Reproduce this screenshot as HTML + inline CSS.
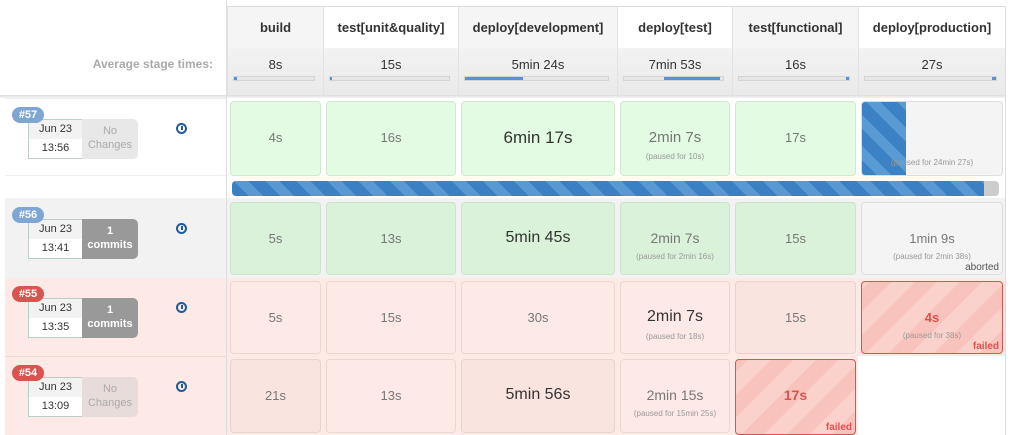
<!DOCTYPE html>
<html><head><meta charset="utf-8"><style>
body{margin:0;width:1015px;height:435px;background:#fff;font-family:"Liberation Sans",Arial,sans-serif;position:relative;overflow:hidden}
div{box-sizing:border-box}
.a{position:absolute}
.hd{position:absolute;top:7px;height:41px;font-weight:bold;font-size:13px;color:#333;text-align:center;line-height:42px;border-left:1px solid #e2e2e2;background:#fff}
.hd.g{background:#f5f5f5}
.av{position:absolute;top:48px;height:47px;font-size:13px;color:#333;text-align:center;padding-top:9px;border-left:1px solid #e2e2e2;background:linear-gradient(#f2f2f2,#eaeaea)}
.bar{position:absolute;top:28px;left:5px;right:8px;height:5px;background:#e6e6e6;border:1px solid #d4d4d4}
.bar i{position:absolute;top:0;bottom:0;background:#5b8fd6}
.c{position:absolute;border-radius:4px;border:1px solid #d2e8d2;background:#e3fae3;text-align:center;color:#777;font-size:13px}
.c s{text-decoration:none;display:block;font-size:8px;color:#999;margin-top:6px}
.g2{background:#d9f2d9;border-color:#cde3cd}
.p{background:#fde9e5;border-color:#ecd6d2}
.p2{background:#fae4e0;border-color:#e9d3cf}
.f{background:repeating-linear-gradient(-45deg,#f9c3bd 0 16px,#fbd2cb 16px 32px);border:1px solid #d9534f;color:#d9534f}
.lbl{position:absolute;right:3px;bottom:1px;font-size:10px;font-weight:bold}
.badge{position:absolute;width:32px;height:16px;border-radius:8px;color:#fff;font-size:11px;font-weight:bold;text-align:center;line-height:16px}
.dt{position:absolute;width:55px;height:40px;border:1px solid #b8cfc8;background:#fff;font-size:11px;color:#333;text-align:center}
.dt div{height:19px;line-height:19px}
.dt div:first-child{background:#f2f2f2}
.ch{position:absolute;width:56px;height:40px;border-radius:0 5px 5px 0;font-size:11px;text-align:center;line-height:14px;padding-top:5px}
.ico{position:absolute;width:11px;height:11px;border:2px solid #1f5a9c;border-radius:50%}
.ico:after{content:"";position:absolute;left:2.5px;top:1px;width:2px;height:4px;background:#1f5a9c}
</style></head><body>
<div class="a" style="left:227px;top:6px;width:779px;height:1px;background:#ddd"></div>
<div class="a" style="left:1005px;top:6px;width:1px;height:429px;background:#ddd"></div>
<div class="hd g" style="left:227px;width:96px">build</div>
<div class="hd" style="left:323px;width:135px">test[unit&amp;quality]</div>
<div class="hd g" style="left:458px;width:159px">deploy[development]</div>
<div class="hd" style="left:617px;width:115px">deploy[test]</div>
<div class="hd g" style="left:732px;width:126px">test[functional]</div>
<div class="hd" style="left:858px;width:147px">deploy[production]</div>
<div class="a" style="left:0;top:57px;width:213px;text-align:right;font-size:12px;color:#aaa;font-weight:bold">Average stage times:</div>
<div class="av" style="left:227px;width:96px">8s<div class="bar"><i style="left:0;width:3px"></i></div></div>
<div class="av" style="left:323px;width:135px">15s<div class="bar"><i style="left:0;width:2px"></i></div></div>
<div class="av" style="left:458px;width:159px">5min 24s<div class="bar"><i style="left:0;width:58px"></i></div></div>
<div class="av" style="left:617px;width:115px">7min 53s<div class="bar"><i style="left:40px;width:56px"></i></div></div>
<div class="av" style="left:732px;width:126px">16s<div class="bar"><i style="right:0;width:3px"></i></div></div>
<div class="av" style="left:858px;width:147px">27s<div class="bar"><i style="right:0;width:4px"></i></div></div>
<div class="a" style="left:0;top:95px;width:1005px;height:3px;background:linear-gradient(#ddd,#f5f5f5)"></div>

<div class="a" style="left:5px;top:98px;width:222px;height:160px;background:#fff;border-top:1px solid #eee"></div>
<div class="a" style="left:5px;top:175px;width:222px;height:1px;background:#eee"></div>
<div class="a" style="left:5px;top:198px;width:1000px;height:80px;background:#f2f2f2"></div>
<div class="a" style="left:5px;top:278px;width:1000px;height:157px;background:#fdeae6"></div>
<div class="a" style="left:5px;top:356px;width:222px;height:1px;background:#f3d8d3"></div>
<div class="a" style="left:226px;top:0;width:1px;height:435px;background:#ddd"></div>
<div class="a" style="left:858px;top:356px;width:147px;height:79px;background:#fff"></div>

<div class="dt" style="left:28px;top:119px"><div>Jun 23</div><div>13:56</div></div>
<div class="ch" style="left:82px;top:119px;background:#e8e8e8;color:#aaa">No<br>Changes</div>
<div class="badge" style="left:12px;top:107px;background:#7fa6d3">#57</div>
<div class="ico" style="left:176px;top:123px"></div>

<div class="dt" style="left:28px;top:219px"><div>Jun 23</div><div>13:41</div></div>
<div class="ch" style="left:82px;top:219px;background:#999;color:#fff;font-weight:bold">1<br>commits</div>
<div class="badge" style="left:12px;top:207px;background:#7fa6d3">#56</div>
<div class="ico" style="left:176px;top:223px"></div>

<div class="dt" style="left:28px;top:298px"><div>Jun 23</div><div>13:35</div></div>
<div class="ch" style="left:82px;top:298px;background:#999;color:#fff;font-weight:bold">1<br>commits</div>
<div class="badge" style="left:12px;top:286px;background:#d9534f">#55</div>
<div class="ico" style="left:176px;top:302px"></div>

<div class="dt" style="left:28px;top:377px"><div>Jun 23</div><div>13:09</div></div>
<div class="ch" style="left:82px;top:377px;background:#e8dcda;color:#aaa">No<br>Changes</div>
<div class="badge" style="left:12px;top:365px;background:#d9534f">#54</div>
<div class="ico" style="left:176px;top:381px"></div>

<div class="c" style="left:230px;top:101px;width:91px;height:75px;padding-top:28px">4s</div>
<div class="c" style="left:326px;top:101px;width:130px;height:75px;padding-top:28px">16s</div>
<div class="c" style="left:461px;top:101px;width:154px;height:75px;padding-top:26px;color:#333;font-size:17px">6min 17s</div>
<div class="c" style="left:620px;top:101px;width:110px;height:75px;padding-top:27px;font-size:15px">2min 7s<s>(paused for 10s)</s></div>
<div class="c" style="left:735px;top:101px;width:121px;height:75px;padding-top:28px">17s</div>
<div class="c" style="left:861px;top:101px;width:142px;height:75px;background:#f4f4f4;border-color:#ddd;overflow:hidden"><div class="a" style="left:0;top:0;width:44px;height:75px;background:repeating-linear-gradient(45deg,#3b82c4 0 12px,#5b9bd5 12px 22px)"></div><s style="position:absolute;left:0;right:0;top:50px">(paused for 24min 27s)</s></div>
<div class="a" style="left:232px;top:181px;width:767px;height:15px;border-radius:4px;background:#ccc;overflow:hidden"><div style="width:752px;height:15px;background:repeating-linear-gradient(45deg,#3a80c3 0 12px,#5a98d3 12px 22px)"></div></div>

<div class="c g2" style="left:230px;top:202px;width:91px;height:73px;padding-top:28px">5s</div>
<div class="c g2" style="left:326px;top:202px;width:130px;height:73px;padding-top:28px">13s</div>
<div class="c g2" style="left:461px;top:202px;width:154px;height:73px;padding-top:26px;color:#333;font-size:16px">5min 45s</div>
<div class="c g2" style="left:620px;top:202px;width:110px;height:73px;padding-top:27px;font-size:14px">2min 7s<s>(paused for 2min 16s)</s></div>
<div class="c g2" style="left:735px;top:202px;width:121px;height:73px;padding-top:28px">15s</div>
<div class="c" style="left:861px;top:202px;width:142px;height:73px;padding-top:28px;background:#f4f4f4;border-color:#ddd;font-size:13px">1min 9s<s>(paused for 2min 38s)</s><span class="lbl" style="color:#555;font-weight:normal">aborted</span></div>

<div class="c p" style="left:230px;top:281px;width:91px;height:73px;padding-top:28px">5s</div>
<div class="c p" style="left:326px;top:281px;width:130px;height:73px;padding-top:28px">15s</div>
<div class="c p" style="left:461px;top:281px;width:154px;height:73px;padding-top:28px">30s</div>
<div class="c p" style="left:620px;top:281px;width:110px;height:73px;padding-top:26px;color:#333;font-size:16px">2min 7s<s>(paused for 18s)</s></div>
<div class="c p2" style="left:735px;top:281px;width:121px;height:73px;padding-top:28px">15s</div>
<div class="c f" style="left:861px;top:281px;width:142px;height:73px;padding-top:28px;font-weight:bold">4s<s style="font-weight:normal">(paused for 38s)</s><span class="lbl">failed</span></div>

<div class="c p2" style="left:230px;top:359px;width:91px;height:74px;padding-top:28px">21s</div>
<div class="c p" style="left:326px;top:359px;width:130px;height:74px;padding-top:28px">13s</div>
<div class="c p2" style="left:461px;top:359px;width:154px;height:74px;padding-top:26px;color:#333;font-size:16px">5min 56s</div>
<div class="c p" style="left:620px;top:359px;width:110px;height:74px;padding-top:27px;font-size:14px">2min 15s<s>(paused for 15min 25s)</s></div>
<div class="c f" style="left:735px;top:359px;width:121px;height:76px;padding-top:27px;font-weight:bold;font-size:14px">17s<span class="lbl">failed</span></div>
</body></html>
